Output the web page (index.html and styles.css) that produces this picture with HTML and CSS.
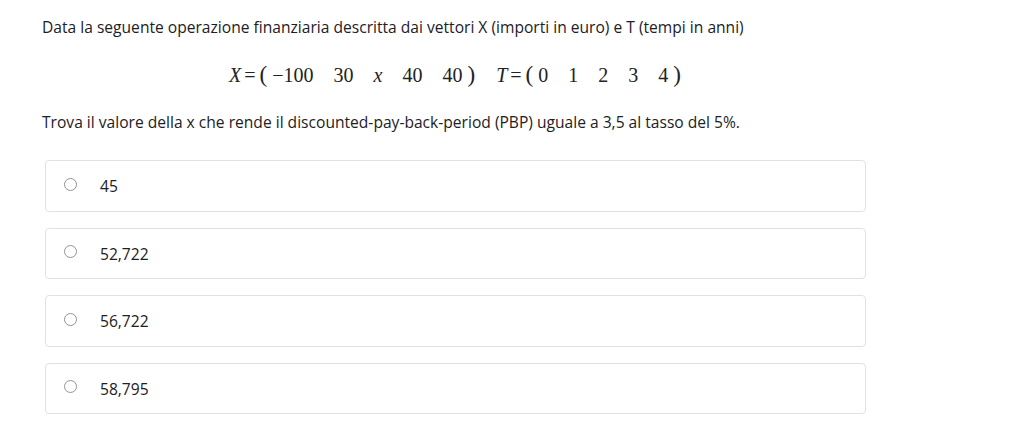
FILE: index.html
```html
<!DOCTYPE html>
<html lang="it">
<head>
<meta charset="utf-8">
<link rel="stylesheet" href="styles.css">
</head>
<body>
<div class="question">
  <p class="qtext">Data la seguente operazione finanziaria descritta dai vettori X (importi in euro) e T (tempi in anni)</p>
  <div class="math">
    <span class="mi">X</span><span class="rel">=</span><span class="paren">(</span><span class="row"><span class="cell">&minus;100</span><span class="cell">30</span><span class="cell mi">x</span><span class="cell">40</span><span class="cell">40</span></span><span class="paren">)</span>
    <span class="sp"></span>
    <span class="mi">T</span><span class="rel">=</span><span class="paren">(</span><span class="row"><span class="cell">0</span><span class="cell">1</span><span class="cell">2</span><span class="cell">3</span><span class="cell">4</span></span><span class="paren">)</span>
  </div>
  <p class="qtext">Trova il valore della x che rende il discounted-pay-back-period (PBP) uguale a 3,5 al tasso del 5%.</p>
  <div class="answers">
    <label class="answer"><span class="radio"></span><span class="label">45</span></label>
    <label class="answer"><span class="radio"></span><span class="label">52,722</span></label>
    <label class="answer"><span class="radio"></span><span class="label">56,722</span></label>
    <label class="answer"><span class="radio"></span><span class="label">58,795</span></label>
  </div>
</div>
</body>
</html>
```
FILE: styles.css
```css
html, body {
  margin: 0;
  padding: 0;
  background: #ffffff;
}
body {
  font-family: "Open Sans", "Noto Sans", sans-serif;
  font-size: 15.6px;
  color: #1d2125;
}
.question {
  width: 824px;
  padding: 16px 0 0 42px;
}
.qtext {
  margin: 0;
  line-height: 22px;
  white-space: nowrap;
}
.math {
  display: flex;
  justify-content: center;
  align-items: center;
  height: 50px;
  margin: 12px 0 11px 3px;
  font-family: "Liberation Serif", "DejaVu Serif", serif;
  font-size: 20px;
  color: #222;
}
.mi {
  font-style: italic;
}
.rel {
  margin: 0 3px;
}
.paren {
  font-size: 23px;
  margin: 0 1px;
}
.row {
  display: flex;
  gap: 20px;
  margin: 0 4px;
}
.sp {
  width: 20px;
}
.answers {
  display: flex;
  flex-direction: column;
  gap: 16px;
  margin: 27px 0 0 3px;
}
.answer {
  display: flex;
  align-items: center;
  height: 51.5px;
  box-sizing: border-box;
  border: 1px solid #dee2e6;
  border-radius: 4px;
  padding-left: 18px;
}
.radio {
  width: 13px;
  height: 13px;
  box-sizing: border-box;
  border: 1px solid #8f9499;
  border-radius: 50%;
  margin-top: -3px;
}
.label {
  margin-left: 23px;
  margin-top: 1px;
}
```
